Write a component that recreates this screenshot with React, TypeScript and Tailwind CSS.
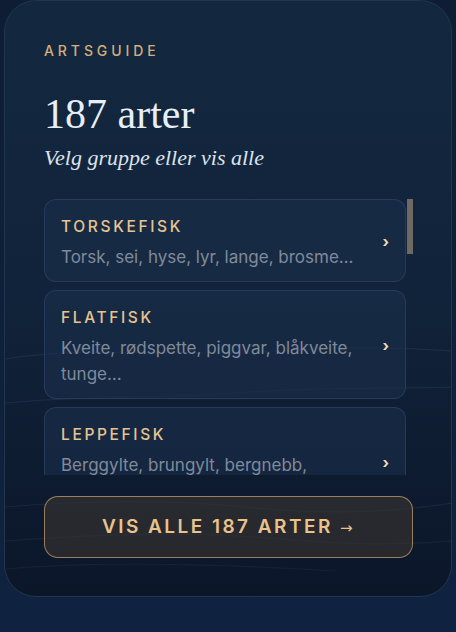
import React from "react";

const groups = [
  { t: "TORSKEFISK", s: "Torsk, sei, hyse, lyr, lange, brosme…" },
  { t: "FLATFISK", s: "Kveite, rødspette, piggvar, blåkveite, tunge…" },
  { t: "LEPPEFISK", s: "Berggylte, brungylt, bergnebb, grønngylt…" },
  { t: "LAKSEFISK", s: "Laks, sjøørret, røye, regnbueørret…" },
  { t: "MAKRELLFISK", s: "Makrell, makrellstørje, hestmakrell…" },
  { t: "SILDEFISK", s: "Sild, brisling, ansjos, sardin…" },
  { t: "HAI OG ROKKER", s: "Pigghå, håbrann, skate, piggskate…" },
  { t: "ULKEFISK", s: "Ulke, rognkjeks, knurr, tiskjeggkluse…" },
  { t: "STEINBITER", s: "Gråsteinbit, flekksteinbit, blåsteinbit…" },
  { t: "ÅLEFISK", s: "Ål, havål, tangbrosme…" },
  { t: "KREPSDYR", s: "Hummer, krabbe, kongekrabbe, reke…" },
  { t: "ANDRE ARTER", s: "Breiflabb, uer, havmus, lysing…" },
];

export default function App() {
  return (
    <div className="w-[456px] h-[632px] overflow-hidden bg-gradient-to-b from-[#0e1d33] to-[#0f2340]">
      <div
        className="relative mx-[4px] h-[597px] rounded-[32px] border border-[#1f3550] bg-gradient-to-b from-[#13283f] via-[#11233a] to-[#0b1629] overflow-hidden pt-[40px] pl-[39px] pr-[39px]"
        style={{ fontFamily: "Inter, 'Noto Sans', sans-serif" }}
      >
        <svg
          className="absolute left-0 top-0 pointer-events-none"
          width="448"
          height="597"
          viewBox="0 0 448 597"
          fill="none"
        >
          <path d="M0 358 C60 348 120 352 200 352 S340 342 448 350" stroke="#ffffff" strokeOpacity="0.06" strokeWidth="1.2" />
          <path d="M0 402 C80 394 150 398 230 392 S360 388 448 386" stroke="#ffffff" strokeOpacity="0.06" strokeWidth="1.2" />
          <path d="M0 506 C70 500 160 498 240 506 S380 512 448 502" stroke="#ffffff" strokeOpacity="0.06" strokeWidth="1.2" />
          <path d="M0 540 C80 534 170 530 250 536 S370 546 448 540" stroke="#ffffff" strokeOpacity="0.05" strokeWidth="1.2" />
          <path d="M0 568 C90 560 200 562 330 570" stroke="#ffffff" strokeOpacity="0.045" strokeWidth="1.2" />
        </svg>

        <div className="relative">
          <div className="text-[14px] leading-[20px] tracking-[0.28em] text-[#d4ae7b] font-medium">
            ARTSGUIDE
          </div>
          <div
            className="mt-[32px] text-[42px] leading-[42px] text-[#e8eef8]"
            style={{ fontFamily: "'Liberation Serif', 'DejaVu Serif', serif" }}
          >
            187 arter
          </div>
          <div
            className="mt-[9px] text-[22px] leading-[28px] italic text-[#dce3ed]"
            style={{ fontFamily: "'Liberation Serif', 'DejaVu Serif', serif" }}
          >
            Velg gruppe eller vis alle
          </div>

          <div className="relative mt-[27px] w-[369px]">
            <div className="h-[276px] w-[362px] overflow-y-auto [scrollbar-width:none] flex flex-col gap-[8px]">
              {groups.map((g) => (
                <div
                  key={g.t}
                  className="shrink-0 w-[362px] flex items-center rounded-[12px] border border-[#2a4062]/80 bg-[#1a2f4b]/60 pl-[16px] pr-[16px] pt-[17px] pb-[11px]"
                >
                  <div className="flex-1 min-w-0 pr-[14px]">
                    <div className="text-[15.5px] leading-[20px] tracking-[0.17em] font-medium text-[#e6c491]">
                      {g.t}
                    </div>
                    <div className="mt-[7px] text-[17px] leading-[26px] text-[#808a99]">
                      {g.s}
                    </div>
                  </div>
                  <div className="mb-[4px] text-[15px] font-bold leading-none text-[#f3dcb4]">›</div>
                </div>
              ))}
            </div>
            <div className="absolute right-0 top-0 w-[6px] h-[55px] bg-[#6e6a63]" />
          </div>

          <button className="mt-[21px] w-[369px] h-[62px] rounded-[14px] border border-[#b89668]/80 bg-[#35332f]/65 text-[19px] font-semibold tracking-[0.13em] text-[#e9c38b]">
            VIS ALLE 187 ARTER{" "}
            <span className="text-[15px] font-normal" style={{ fontFamily: "'DejaVu Sans', sans-serif" }}>→</span>
          </button>
        </div>
      </div>
    </div>
  );
}
